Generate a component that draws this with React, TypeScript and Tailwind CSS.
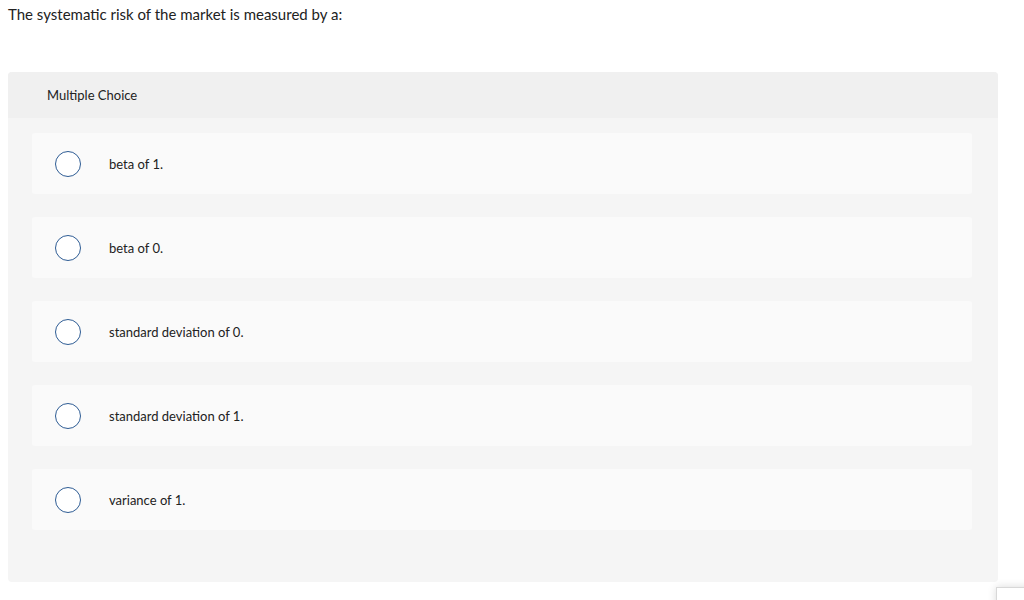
import React from "react";

const options = [
  "beta of 1.",
  "beta of 0.",
  "standard deviation of 0.",
  "standard deviation of 1.",
  "variance of 1.",
];

export default function App() {
  return (
    <div className="relative w-[1024px] h-[600px] overflow-hidden bg-white text-[#222] font-['Lato','Open_Sans',sans-serif]">
      <div className="pl-2 pt-[5px] text-[15px] leading-[18px]">
        The systematic risk of the market is measured by a:
      </div>
      <div className="mt-[49px] ml-2 w-[990px] rounded bg-[#f5f5f5] pb-[52px]">
        <div className="h-[46px] rounded-t bg-[#f0f0f0] pl-[39px] flex items-center text-[13px] pt-px">
          Multiple Choice
        </div>
        <div className="mt-[15px] flex flex-col gap-[23px] pl-6 pr-[26px]">
          {options.map((o) => (
            <div
              key={o}
              className="h-[61px] rounded-[3px] bg-[#fafafa] flex items-center"
            >
              <div className="ml-[23px] w-[26px] h-[26px] rounded-full border-[1.5px] border-[#2e5c94] bg-white" />
              <div className="ml-[28px] text-[13px] pt-[3px]">{o}</div>
            </div>
          ))}
        </div>
      </div>
      <div className="absolute left-[996px] top-[587px] w-[40px] h-[20px] bg-white border border-[#d8d8d8] shadow-[0_0_8px_rgba(0,0,0,0.15)]" />
    </div>
  );
}
